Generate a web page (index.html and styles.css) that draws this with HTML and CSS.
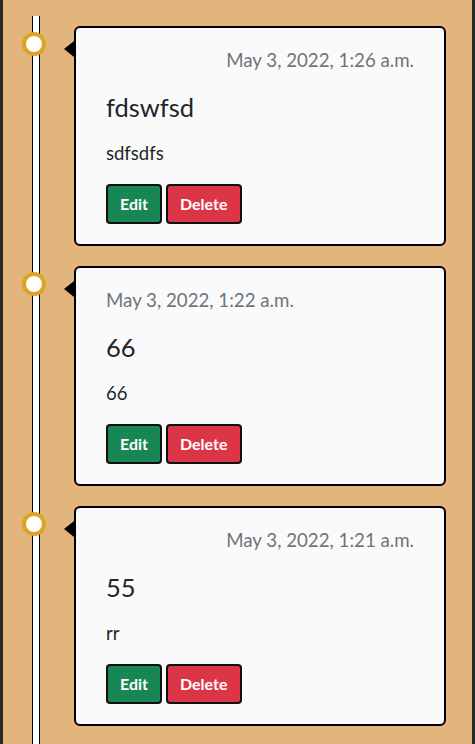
FILE: index.html
```html
<!DOCTYPE html>
<html lang="en">
<head>
<meta charset="utf-8">
<title>Timeline</title>
<link rel="stylesheet" href="styles.css">
</head>
<body>
<div class="page">
  <ul class="timeline">
    <li class="entry">
      <span class="dot"></span>
      <article class="card">
        <p class="date date-right">May 3, 2022, 1:26 a.m.</p>
        <h3 class="title">fdswfsd</h3>
        <p class="text">sdfsdfs</p>
        <div class="actions">
          <a class="btn btn-edit" href="#">Edit</a>
          <a class="btn btn-delete" href="#">Delete</a>
        </div>
      </article>
    </li>
    <li class="entry">
      <span class="dot"></span>
      <article class="card">
        <p class="date">May 3, 2022, 1:22 a.m.</p>
        <h3 class="title">66</h3>
        <p class="text">66</p>
        <div class="actions">
          <a class="btn btn-edit" href="#">Edit</a>
          <a class="btn btn-delete" href="#">Delete</a>
        </div>
      </article>
    </li>
    <li class="entry">
      <span class="dot"></span>
      <article class="card">
        <p class="date date-right">May 3, 2022, 1:21 a.m.</p>
        <h3 class="title">55</h3>
        <p class="text">rr</p>
        <div class="actions">
          <a class="btn btn-edit" href="#">Edit</a>
          <a class="btn btn-delete" href="#">Delete</a>
        </div>
      </article>
    </li>
  </ul>
</div>
</body>
</html>
```
FILE: styles.css
```css
* { box-sizing: border-box; }

html, body {
  margin: 0;
  padding: 0;
  background: #282828;
  font-family: Lato, "Open Sans", sans-serif;
}

.page {
  margin: 0 3px;
  min-height: 100vh;
  background: #e2b57c;
}

.timeline {
  position: relative;
  list-style: none;
  margin: 0;
  padding: 26px 26px 20px 0;
  display: flex;
  flex-direction: column;
  gap: 20px;
}

.timeline::before {
  content: "";
  position: absolute;
  left: 29px;
  top: 16px;
  bottom: 0;
  width: 6px;
  background: #fff;
  border-left: 1px solid #000;
  border-right: 1px solid #000;
}

.entry {
  display: flex;
  align-items: flex-start;
}

.dot {
  position: relative;
  z-index: 1;
  flex: none;
  width: 24px;
  height: 24px;
  margin: 6px 28px 0 19px;
  border-radius: 50%;
  background: #fff;
  border: 4px solid #daa520;
}

.card {
  position: relative;
  flex: 1;
  height: 220px;
  background: #fafafa;
  border: 2px solid #000;
  border-radius: 6px;
  padding: 19px 30px 20px;
  color: #212529;
}

.card::before {
  content: "";
  position: absolute;
  left: -12px;
  top: 13px;
  width: 0;
  height: 0;
  border-top: 8px solid transparent;
  border-bottom: 8px solid transparent;
  border-right: 10px solid #000;
}

.date {
  margin: 0 0 18px;
  font-size: 18.7px;
  line-height: 27px;
  color: #6c757d;
}

.date-right { text-align: right; }

.title {
  margin: 0 0 18px;
  font-size: 25.5px;
  line-height: 1.2;
  font-weight: 400;
}

.text {
  margin: 0 0 19px;
  font-size: 18.5px;
  line-height: 24px;
}

.actions {
  display: flex;
  gap: 4px;
}

.btn {
  display: inline-block;
  padding: 6px 12px;
  font-size: 16px;
  line-height: 24px;
  font-weight: 700;
  color: #fff;
  text-decoration: none;
  border: 2px solid #111;
  border-radius: 4px;
}

.btn-edit { background: #198754; }
.btn-delete { background: #dc3545; }
```
